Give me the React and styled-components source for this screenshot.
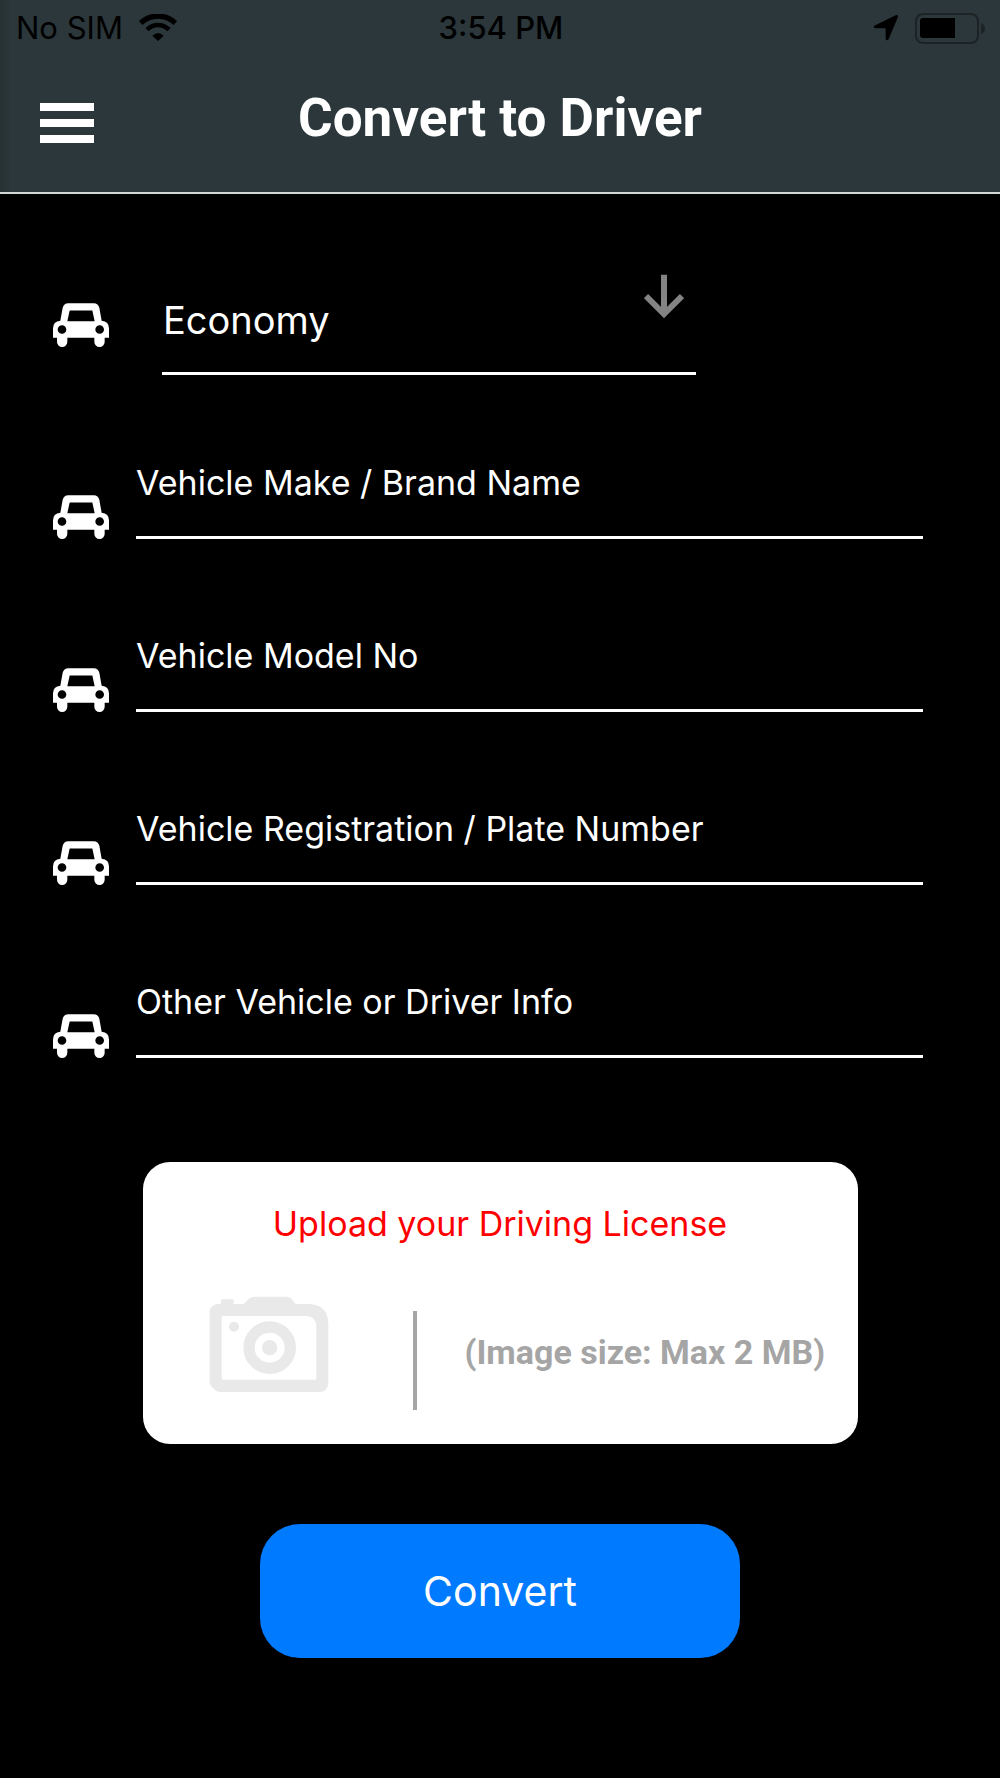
import React, { useState } from "react";
import styled, { createGlobalStyle } from "styled-components";

const fields = [
  { id: "make", label: "Vehicle Make / Brand Name" },
  { id: "model", label: "Vehicle Model No" },
  { id: "plate", label: "Vehicle Registration / Plate Number" },
  { id: "other", label: "Other Vehicle or Driver Info" },
];

const CarIcon = () => (
  <CarSvg viewBox="0 0 168 131" aria-hidden="true">
    <path
      fill="currentColor"
      fillRule="evenodd"
      d="M46 0H122Q136 0 139 14L146 53Q168 55 168 76V104H155V116A15.500 15.500 0 0 1 124 116V104H43V116A15.500 15.500 0 0 1 12 116V104H0V76Q0 55 22 53L29 14Q32 0 46 0ZM50 22L43 54H125L118 22ZM27 66a13 13 0 1 0 0 26a13 13 0 1 0 0-26ZM140 66a13 13 0 1 0 0 26a13 13 0 1 0 0-26Z"
    />
  </CarSvg>
);

const WifiIcon = () => (
  <svg width="38" height="28" viewBox="0 0 114 84" aria-hidden="true">
    <g fill="none" stroke="#000">
      <path d="M5 27Q28 6 57 6T109 27" strokeWidth="16" />
      <path d="M24 47Q39 33 57 33T90 47" strokeWidth="14" />
    </g>
    <path d="M40 65Q57 49 74 65L57 81Z" />
  </svg>
);

const LocationIcon = () => (
  <svg width="26" height="26" viewBox="0 0 78 78" aria-hidden="true">
    <path d="M4 32L68 1Q77 -2 74 8L47 72Q42 80 38 72V40H7Q-1 38 4 32Z" />
  </svg>
);

const BatteryIcon = () => (
  <svg width="71" height="31" viewBox="0 0 71 31" aria-hidden="true">
    <rect
      x="1"
      y="1"
      width="62"
      height="29"
      rx="7"
      fill="none"
      stroke="#1b2325"
      strokeWidth="2"
    />
    <path d="M8 5H40V25H8Q5 25 5 22V8Q5 5 8 5Z" />
    <path d="M66 10Q70 12 70 15.500T66 21Z" fill="#1b2325" />
  </svg>
);

const ArrowIcon = () => (
  <svg width="40" height="44" viewBox="0 0 120 132" aria-hidden="true">
    <path
      d="M60 2V122M6 66L60 120L114 66"
      fill="none"
      stroke="#848484"
      strokeWidth="18"
    />
  </svg>
);

const CameraIcon = () => (
  <svg width="120" height="97" viewBox="0 0 360 291" aria-hidden="true">
    <path
      fill="#e9e9e9"
      fillRule="evenodd"
      d="M40 10H70Q74 10 74 14V24H104L120 8Q128 2 136 2H232Q242 2 248 9L260 24H300Q358 26 358 84V260Q356 288 330 288H32Q24 288 18 282L6 270Q2 266 2 258V44Q2 38 7 34L13 29Q18 24 26 24H36V14Q36 10 40 10ZM42 60Q38 60 38 64V246Q38 251 42 251H318Q322 251 322 246V90Q320 62 292 60Z"
    />
    <circle cx="75" cy="92" r="15" fill="#e9e9e9" />
    <circle
      cx="182"
      cy="155"
      r="62"
      fill="none"
      stroke="#e9e9e9"
      strokeWidth="34"
    />
    <circle cx="182" cy="155" r="23" fill="#e9e9e9" />
  </svg>
);

const ConvertToDriver = () => {
  const [type, setType] = useState("Economy");
  const [values, setValues] = useState({});

  const onChangeHandler = (e) => {
    setValues({ ...values, [e.target.name]: e.target.value });
  };

  const onConvertFormSubmitHandler = (e) => {
    e.preventDefault();
  };

  return (
    <Page>
      <GlobalStyle />
      <Header>
        <StatusBar>
          <StatusGroup>
            <StatusText>No SIM</StatusText>
            <WifiIcon />
          </StatusGroup>
          <StatusText $bold>3:54 PM</StatusText>
          <StatusGroup $end>
            <LocationIcon />
            <BatteryIcon />
          </StatusGroup>
        </StatusBar>
        <NavBar>
          <MenuButton type="button" aria-label="Menu">
            <MenuLine />
            <MenuLine />
            <MenuLine />
          </MenuButton>
          <Title>Convert to Driver</Title>
        </NavBar>
      </Header>

      <Form onSubmit={onConvertFormSubmitHandler}>
        <TypeRow>
          <CarIcon />
          <SelectContainer>
            <Select
              aria-label="Vehicle type"
              value={type}
              onChange={(e) => setType(e.target.value)}
            >
              <option>Economy</option>
            </Select>
            <ArrowIcon />
          </SelectContainer>
        </TypeRow>

        {fields.map((field) => (
          <FieldRow key={field.id}>
            <CarIcon />
            <InputContainer>
              <Label htmlFor={field.id}>{field.label}</Label>
              <Input
                id={field.id}
                name={field.id}
                type="text"
                value={values[field.id] || ""}
                onChange={onChangeHandler}
              />
            </InputContainer>
          </FieldRow>
        ))}

        <UploadCard>
          <UploadTitle htmlFor="license">Upload your Driving License</UploadTitle>
          <UploadBody>
            <CameraIcon />
            <Divider />
            <UploadHint>(Image size: Max 2 MB)</UploadHint>
          </UploadBody>
          <FileInput id="license" type="file" accept="image/*" />
        </UploadCard>

        <SubmitButton type="submit">Convert</SubmitButton>
      </Form>
    </Page>
  );
};

const GlobalStyle = createGlobalStyle`
  * {
    box-sizing: border-box;
  }
  body {
    margin: 0;
    background-color: #000000;
    font-family: Inter, "Liberation Sans", sans-serif;
  }
  svg {
    display: block;
    flex-shrink: 0;
  }
`;

const Page = styled.div`
  min-height: 100vh;
  background-color: #000000;
  color: #ffffff;
`;

const Header = styled.header`
  background: linear-gradient(to right, #263232, #2b373b 12px);
  border-bottom: 2px solid #d3d7d8;
`;

const StatusBar = styled.div`
  display: grid;
  grid-template-columns: 1fr auto 1fr;
  align-items: center;
  height: 56px;
  padding: 0 14px 0 16px;
  color: #000000;
  font-size: 31px;
`;

const StatusGroup = styled.div`
  display: flex;
  align-items: center;
  justify-content: ${(props) => (props.$end ? "flex-end" : "flex-start")};
  gap: 16px;
`;

const StatusText = styled.span`
  padding-bottom: 2px;
  font-weight: ${(props) => (props.$bold ? 500 : 400)};
`;

const NavBar = styled.div`
  display: grid;
  grid-template-columns: 1fr auto 1fr;
  align-items: center;
  height: 136px;
  padding: 0 40px 2px;
`;

const MenuButton = styled.button`
  display: flex;
  flex-direction: column;
  gap: 8px;
  width: 54px;
  padding: 0;
  border: none;
  background: none;
  cursor: pointer;
`;

const MenuLine = styled.span`
  height: 8px;
  background-color: #ffffff;
`;

const Title = styled.h1`
  margin: 0;
  padding-bottom: 10px;
  font-family: Roboto, "Liberation Sans", sans-serif;
  font-size: 53px;
  font-weight: 700;
`;

const Form = styled.form`
  display: flex;
  flex-direction: column;
  padding: 80px 0 120px;
`;

const CarSvg = styled.svg`
  width: 56px;
  height: 44px;
`;

const TypeRow = styled.div`
  display: flex;
  align-items: flex-end;
  gap: 53px;
  padding: 0 53px;

  ${CarSvg} {
    margin-bottom: 28px;
  }
`;

const SelectContainer = styled.div`
  display: flex;
  align-items: flex-start;
  flex: 0 1 534px;
  height: 101px;
  padding-right: 12px;
  border-bottom: 3px solid #ffffff;
`;

const Select = styled.select`
  flex: 1;
  min-width: 0;
  height: 92px;
  padding: 0 0 0 1px;
  border: none;
  outline: none;
  appearance: none;
  background: none;
  color: #ffffff;
  font-family: inherit;
  font-size: 38px;
`;

const FieldRow = styled.div`
  display: flex;
  align-items: flex-end;
  gap: 27px;
  height: 173px;
  padding: 0 77px 9px 53px;
`;

const InputContainer = styled.div`
  display: flex;
  flex-direction: column;
  flex: 1;
`;

const Label = styled.label`
  font-size: 34px;
  line-height: 40px;
`;

const Input = styled.input`
  height: 36px;
  padding: 0;
  border: none;
  border-bottom: 3px solid #ffffff;
  outline: none;
  background: none;
  color: #ffffff;
  font-family: inherit;
  font-size: 24px;
`;

const UploadCard = styled.div`
  position: relative;
  align-self: center;
  width: 715px;
  max-width: 90%;
  margin-top: 95px;
  padding: 40px 27px 34px 66px;
  border-radius: 27px;
  background-color: #ffffff;
`;

const UploadTitle = styled.label`
  display: block;
  padding-right: 39px;
  color: #ff0000;
  font-size: 34px;
  line-height: 44px;
  text-align: center;
`;

const UploadBody = styled.div`
  display: flex;
  align-items: flex-start;
  padding-top: 50px;
`;

const Divider = styled.div`
  width: 4px;
  height: 99px;
  margin: 15px 48px 0 84px;
  background-color: #a5a5a5;
`;

const UploadHint = styled.span`
  padding-top: 34px;
  color: #a5a5a5;
  font-family: Roboto, "Liberation Sans", sans-serif;
  font-size: 34px;
  font-weight: 700;
  line-height: 44px;
  white-space: nowrap;
`;

const FileInput = styled.input`
  position: absolute;
  inset: 0;
  width: 100%;
  opacity: 0;
  cursor: pointer;
`;

const SubmitButton = styled.button`
  align-self: center;
  width: 48%;
  height: 134px;
  margin-top: 80px;
  border: none;
  border-radius: 40px;
  background-color: #007aff;
  color: #ffffff;
  font-family: inherit;
  font-size: 41px;
  cursor: pointer;
`;

export default ConvertToDriver;
